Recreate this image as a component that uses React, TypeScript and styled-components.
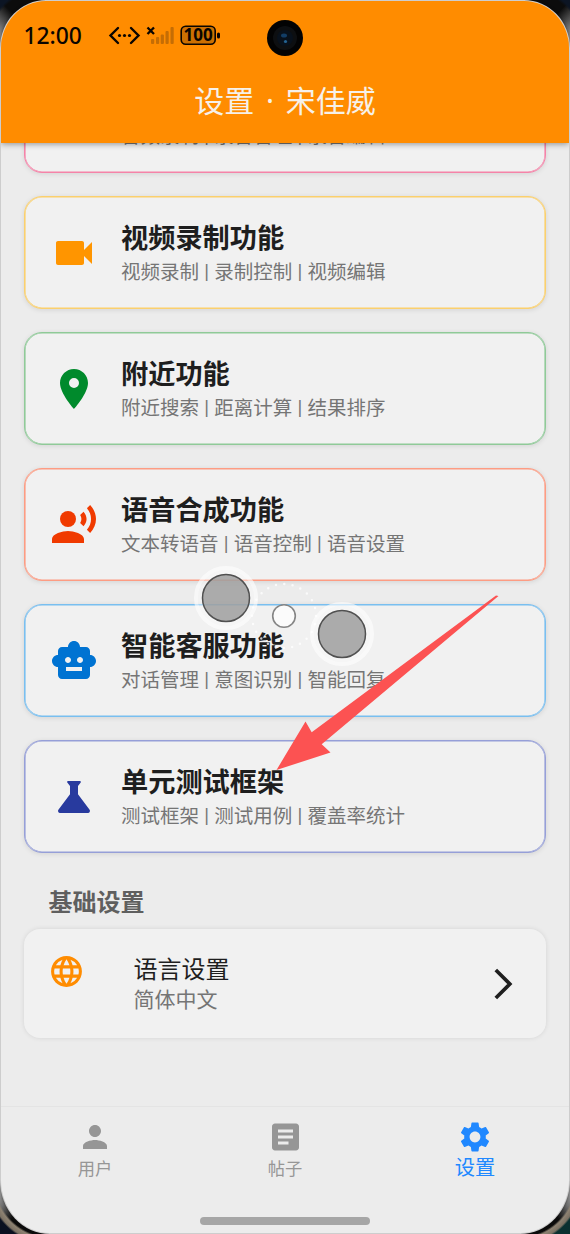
import React from "react";
import styled, { createGlobalStyle } from "styled-components";
import type { IconType } from "react-icons";
import {
  MdVideocam,
  MdLocationOn,
  MdRecordVoiceOver,
  MdSmartToy,
  MdScience,
  MdLanguage,
  MdPerson,
  MdArticle,
  MdSettings,
} from "react-icons/md";

const Global = createGlobalStyle`
  * { box-sizing: border-box; }
  body {
    margin: 0;
    font-family: "Noto Sans CJK SC", "Noto Sans", sans-serif;
    color: #1e1e1e;
  }
`;

const Device = styled.div`
  position: relative;
  width: 570px;
  height: 1234px;
  overflow: hidden;
  background:
    radial-gradient(circle at 48px 50px, transparent 61px, #0c1524 64px) 0 0 / 285px 60px no-repeat,
    radial-gradient(circle at 237px 50px, transparent 61px, #0c1524 64px) 100% 0 / 285px 60px no-repeat,
    radial-gradient(circle at 52px 6px, transparent 57px, #8d8272 59px, #7b7163 63px, #0a1020 65px) 0 100% / 285px 60px no-repeat,
    radial-gradient(circle at 233px 6px, transparent 57px, #8d8272 59px, #7b7163 63px, #0a3030 65px) 100% 100% / 285px 60px no-repeat,
    linear-gradient(45deg, #a0a0a0 12px, #707070 24px, #0c0c0c 42px) 0 0 / 60px 60px no-repeat,
    linear-gradient(-45deg, #a0a0a0 12px, #707070 24px, #0c0c0c 42px) 100% 0 / 60px 60px no-repeat,
    linear-gradient(135deg, #a0a0a0 12px, #707070 24px, #0c0c0c 40px) 0 100% / 60px 60px no-repeat,
    linear-gradient(-135deg, #a0a0a0 12px, #707070 24px, #0c0c0c 40px) 100% 100% / 60px 60px no-repeat,
    #222;
`;

const Screen = styled.div`
  display: flex;
  flex-direction: column;
  height: 1234px;
  overflow: hidden;
  background: #ececec;
  border-radius: 46px 46px 50px 50px / 48px 48px 54px 54px;
  border: 1px solid rgba(0, 0, 0, 0.13);
  box-shadow: 0 0 3px rgba(0, 0, 0, 0.5);
`;

const Header = styled.header`
  position: relative;
  z-index: 1;
  flex: none;
  height: 142px;
  background: #ff8c00;
  box-shadow: 0 1px 6px rgba(0, 0, 0, 0.4);
`;

const StatusBar = styled.div`
  display: flex;
  align-items: center;
  height: 70px;
  padding-left: 22.5px;
  color: #0a0500;
`;

const Clock = styled.span`
  width: 84.5px;
  font: 500 22.8px/30px "Noto Sans", sans-serif;
`;

const Camera = styled.svg`
  position: absolute;
  left: 265px;
  top: 19px;
`;

const Title = styled.h1`
  margin: 7px 0 0;
  text-align: center;
  font-family: "Noto Sans", "Noto Sans CJK SC", sans-serif;
  font-size: 30px;
  font-weight: 400;
  line-height: 46px;
  word-spacing: 4px;
  color: #f6f1ea;
`;

const Content = styled.main`
  flex: 1;
  min-height: 0;
  overflow: hidden;
  padding: 0 23px;
`;

const CardList = styled.div`
  display: flex;
  flex-direction: column;
  gap: 23px;
  margin-top: -83px;
`;

const FeatureCard = styled.section<{ $border: string }>`
  display: flex;
  align-items: center;
  height: 113px;
  padding-left: 25px;
  border: 1px solid ${(p) => p.$border};
  border-radius: 18px;
  background: #f1f1f1;
  box-shadow: inset 0 0 0 0.6px ${(p) => p.$border}, 0 1px 5px rgba(0, 0, 0, 0.1);
`;

const FeatureIcon = styled.span<{ $color: string }>`
  display: flex;
  width: 71px;
  color: ${(p) => p.$color};
`;

const FeatureBody = styled.div`
  padding-bottom: 1px;
`;

const FeatureTitle = styled.h2`
  margin: 0;
  min-height: 36px;
  font-size: 27.2px;
  font-weight: 700;
  line-height: 36px;
`;

const FeatureText = styled.p`
  margin: 0 0 -6px;
  font-family: Roboto, "Noto Sans CJK SC", sans-serif;
  font-size: 19.5px;
  line-height: 38px;
  word-spacing: 0.4px;
  color: #757575;
`;

const SectionTitle = styled.h3`
  margin: 31px 0 0 24.5px;
  font-size: 24px;
  font-weight: 700;
  line-height: 34px;
  color: #5f5f5f;
`;

const SettingCard = styled.section`
  display: flex;
  height: 109px;
  margin-top: 11px;
  padding: 24px 33px 0 24px;
  border-radius: 16px;
  background: #f1f1f1;
  box-shadow: 0 0 5px rgba(0, 0, 0, 0.1);
`;

const SettingIcon = styled.span`
  width: 85.5px;
  color: #ff8c00;
`;

const SettingBody = styled.div`
  flex: 1;
  margin-top: -1px;
`;

const SettingName = styled.div`
  font-size: 24px;
  line-height: 31px;
`;

const SettingValue = styled.div`
  font-size: 21px;
  line-height: 31px;
  color: #757575;
`;

const Chevron = styled.svg`
  margin-top: 14.5px;
`;

const NavBar = styled.nav`
  position: relative;
  flex: none;
  display: flex;
  height: 127px;
  margin: 0 -1px;
  border-top: 1px solid #e4e4e4;
`;

const NavItem = styled.div<{ $active?: boolean }>`
  flex: 1;
  display: flex;
  flex-direction: column;
  align-items: center;
  padding-top: 12px;
  color: ${(p) => (p.$active ? "#2088ff" : "#969696")};
  font-size: ${(p) => (p.$active ? 20.3 : 17.3)}px;
  line-height: ${(p) => (p.$active ? 23 : 25)}px;

  svg {
    flex: none;
    height: 36px;
  }
`;

const HomeIndicator = styled.div`
  position: absolute;
  left: 200px;
  bottom: 8px;
  width: 170px;
  height: 8px;
  border-radius: 4px;
  background: #a6a6a6;
`;

const Overlay = styled.svg`
  position: absolute;
  inset: 0;
`;

const features: { id: string; title?: string; text: string; border: string; color?: string; icon?: IconType }[] = [
  { id: "audio", text: "音频录制 | 录音管理 | 录音编辑", border: "#f583a8" },
  { id: "video", title: "视频录制功能", text: "视频录制 | 录制控制 | 视频编辑", border: "#fbd06d", color: "#ff9500", icon: MdVideocam },
  { id: "nearby", title: "附近功能", text: "附近搜索 | 距离计算 | 结果排序", border: "#8fca98", color: "#008a2c", icon: MdLocationOn },
  { id: "speech", title: "语音合成功能", text: "文本转语音 | 语音控制 | 语音设置", border: "#fd9c83", color: "#f03a00", icon: MdRecordVoiceOver },
  { id: "bot", title: "智能客服功能", text: "对话管理 | 意图识别 | 智能回复", border: "#79bff0", color: "#0073d2", icon: MdSmartToy },
  { id: "test", title: "单元测试框架", text: "测试框架 | 测试用例 | 覆盖率统计", border: "#969fd8", color: "#283a9e", icon: MdScience },
];

const StatusIcons = () => (
  <svg width="114" height="32" viewBox="108 20 114 32">
    <g fill="none" stroke="#0a0500" strokeWidth="2.4" strokeLinecap="round">
      <path d="M118 28l-7.500 7.500 7.500 7.500M131 28l7.500 7.500-7.500 7.500" />
      <path d="M147.500 27.500l6.500 6.500M154 27.500l-6.500 6.500" strokeWidth="2.3" strokeLinecap="butt" />
    </g>
    <g fill="#0a0500">
      <circle cx="119.500" cy="35.500" r="1.600" />
      <circle cx="124.500" cy="35.500" r="1.600" />
      <circle cx="129.500" cy="35.500" r="1.600" />
    </g>
    <g fill="#c56d04">
      <rect x="151" y="39" width="3.200" height="5" rx="1" />
      <rect x="156" y="37" width="3.200" height="7" rx="1" />
      <rect x="160.700" y="34.500" width="3.200" height="9.500" rx="1" />
      <rect x="165.500" y="31" width="3.200" height="13" rx="1" />
      <rect x="170.500" y="27" width="3.200" height="17" rx="1" />
    </g>
    <rect x="181.200" y="26.200" width="34" height="18" rx="4.500" fill="#cc7002" stroke="#0a0500" strokeWidth="1.600" />
    <rect x="217" y="32.500" width="3" height="6" rx="1.500" fill="#0a0500" />
    <text x="198.100" y="41.400" textAnchor="middle" fontFamily="Noto Sans" fontWeight="700" fontSize="17" fill="#0a0500">100</text>
  </svg>
);

export default function App() {
  return (
    <Device>
      <Global />
      <Screen>
        <Header>
          <StatusBar>
            <Clock>12:00</Clock>
            <StatusIcons />
          </StatusBar>
          <Camera width="38" height="38" viewBox="0 0 38 38">
            <circle cx="19" cy="18" r="18" fill="#030303" />
            <circle cx="19" cy="18" r="12" fill="#0d0f11" />
            <circle cx="19" cy="18" r="8" fill="#08111c" />
            <ellipse cx="18" cy="15.500" rx="3" ry="2" fill="#123d66" />
            <circle cx="19.500" cy="21.500" r="1.600" fill="#246493" />
          </Camera>
          <Title>设置 · 宋佳威</Title>
        </Header>
        <Content>
          <CardList>
            {features.map(({ id, title, text, border, color = "#e91e63", icon: Icon }) => (
              <FeatureCard key={id} $border={border}>
                <FeatureIcon $color={color}>{Icon && <Icon size={48} />}</FeatureIcon>
                <FeatureBody>
                  <FeatureTitle>{title}</FeatureTitle>
                  <FeatureText>{text}</FeatureText>
                </FeatureBody>
              </FeatureCard>
            ))}
          </CardList>
          <SectionTitle>基础设置</SectionTitle>
          <SettingCard>
            <SettingIcon>
              <MdLanguage size={37} />
            </SettingIcon>
            <SettingBody>
              <SettingName>语言设置</SettingName>
              <SettingValue>简体中文</SettingValue>
            </SettingBody>
            <Chevron width="19" height="32" viewBox="0 0 19 32" fill="none" stroke="#1f1f1f" strokeWidth="3.700">
              <path d="M1.800 2L15.800 16L1.800 30" />
            </Chevron>
          </SettingCard>
        </Content>
        <NavBar>
          <NavItem>
            <MdPerson size={36} />
            用户
          </NavItem>
          <NavItem>
            <MdArticle size={37} />
            帖子
          </NavItem>
          <NavItem $active>
            <MdSettings size={36} />
            设置
          </NavItem>
          <HomeIndicator />
        </NavBar>
      </Screen>
      <Overlay width="570" height="1234" viewBox="0 0 570 1234">
        <circle cx="284" cy="616" r="32" fill="none" stroke="#fff" strokeOpacity="0.75" strokeWidth="2.500" strokeLinecap="round" strokeDasharray="0 8.380" />
        {[[226, 598], [342, 634]].map(([cx, cy]) => (
          <g key={cx}>
            <circle cx={cx} cy={cy} r="30" fill="none" stroke="#fff" strokeOpacity="0.6" strokeWidth="4" />
            <circle cx={cx} cy={cy} r="26" fill="none" stroke="#fff" strokeOpacity="0.4" strokeWidth="4" />
            <circle cx={cx} cy={cy} r="23.500" fill="#a0a0a0" fillOpacity="0.86" stroke="#505050" strokeWidth="1.500" />
          </g>
        ))}
        <circle cx="284" cy="616" r="11.300" fill="#fbfbfb" stroke="#858585" strokeWidth="1.600" />
        <path d="M498.500 596L496 595.500L311.700 732.300L305.500 721.500L276.500 770L330.500 752.500L321.700 744.300Z" fill="#fc5252" />
      </Overlay>
    </Device>
  );
}
